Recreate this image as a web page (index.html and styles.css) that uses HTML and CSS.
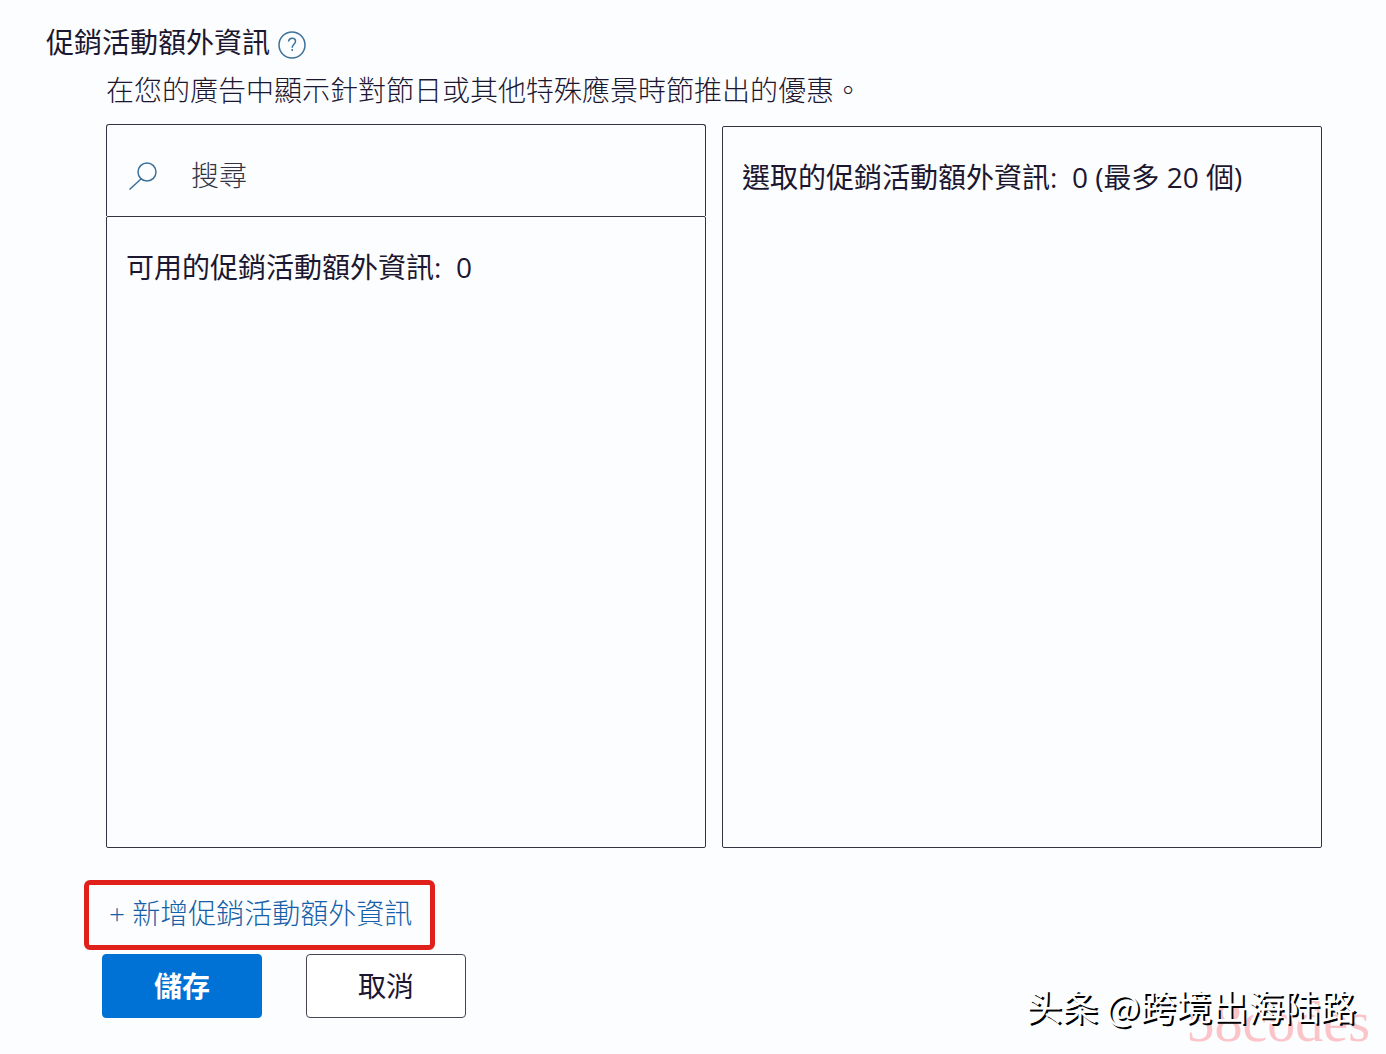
FILE: index.html
```html
<!DOCTYPE html>
<html lang="zh-Hant">
<head>
    <meta charset="utf-8">
    <title>促銷活動額外資訊</title>
    <link rel="stylesheet" href="styles.css">
</head>
<body>
    <form class="promo">
        <div class="heading">
            <h1>促銷活動額外資訊</h1>
            <button type="button" class="help" aria-label="說明">
                <svg width="28" height="28" viewBox="0 0 28 28" fill="none" stroke="currentColor" stroke-width="1.5">
                    <circle cx="14" cy="14" r="13"/>
                    <path d="M10.5 10.5c.3-2.2 1.8-3.3 3.6-3.3 2 0 3.4 1.3 3.4 3 0 3-3.3 3.2-3.3 6.6M14.2 18v2"/>
                </svg>
            </button>
        </div>

        <div class="content">
            <p class="description">在您的廣告中顯示針對節日或其他特殊應景時節推出的優惠。</p>

            <div class="picker">
                <section class="available">
                    <label class="search">
                        <svg width="30" height="30" viewBox="0 0 30 30" fill="none" stroke="currentColor" stroke-width="1.5">
                            <circle cx="18" cy="12" r="9"/>
                            <path d="M12.5 18.5L.5 29.5"/>
                        </svg>
                        <input type="text" placeholder="搜尋" aria-label="搜尋">
                    </label>
                    <div class="panel">可用的促銷活動額外資訊:&nbsp; 0</div>
                </section>
                <section class="panel selected">選取的促銷活動額外資訊:&nbsp; 0 (最多 20 個)</section>
            </div>

            <a class="add" href="#">+ 新增促銷活動額外資訊</a>

            <div class="actions">
                <button type="submit" class="save">儲存</button>
                <button type="button" class="cancel">取消</button>
            </div>
        </div>
    </form>

    <div class="site-mark">58codes</div>
    <div class="author-mark">头条 @跨境出海陆路</div>
</body>
</html>
```

FILE: styles.css
```css
* {
    box-sizing: border-box;
}

body {
    margin: 0;
    background: #fcfdfe;
    color: #1c1730;
    font-family: "Open Sans", "Noto Sans CJK TC", sans-serif;
    font-size: 28px;
    line-height: 40px;
}

button,
input {
    font: inherit;
    color: inherit;
}

.promo {
    padding: 22px 64px 36px 46px;
}

.heading {
    display: flex;
    align-items: center;
    gap: 8px;
}

h1 {
    margin: 0;
    font-size: 28px;
    font-weight: 400;
}

.help {
    display: flex;
    margin-top: 6px;
    padding: 0;
    border: 0;
    background: none;
    color: #3d7199;
    cursor: pointer;
}

.content {
    padding-left: 60px;
}

.description {
    margin: 8px 0 14px;
    font-weight: 300;
}

/* two lists side by side */
.picker {
    display: grid;
    grid-template-columns: 1fr 1fr;
    gap: 16px;
}

.available {
    display: flex;
    flex-direction: column;
}

.search {
    display: flex;
    align-items: center;
    gap: 32px;
    height: 92px;
    padding: 8px 22px 0;
    border: 1px solid #333344;
    border-bottom: 0;
    border-radius: 3px 3px 0 0;
    color: #3d7199;
}

.search input {
    flex: 1;
    min-width: 0;
    padding: 0;
    border: 0;
    outline: 0;
    background: none;
    color: #1c1730;
}

.search input::placeholder {
    color: #333344;
    font-weight: 300;
    opacity: 1;
}

.panel {
    min-height: 632px;
    padding: 30px 19px;
    border: 1px solid #333344;
    border-radius: 2px;
}

.selected {
    margin-top: 2px;
}

.add {
    display: inline-block;
    margin: 32px 0 0 -22px;
    padding: 8px 18px 12px 20px;
    border: 5px solid #e0201b;
    border-radius: 6px;
    color: #1560a8;
    font-weight: 300;
    text-decoration: none;
    vertical-align: top;
}

.actions {
    display: flex;
    gap: 44px;
    margin: 4px 0 0 -4px;
}

.actions button {
    width: 160px;
    height: 64px;
    padding: 0;
    border: 1px solid #454455;
    border-radius: 4px;
    background: #fff;
    cursor: pointer;
}

.actions .save {
    border-color: #0072d6;
    background: #0072d6;
    color: #fff;
    font-weight: 700;
}

/* watermarks over the bottom right corner */
.site-mark,
.author-mark {
    position: absolute;
    white-space: nowrap;
}

.site-mark {
    right: 16px;
    bottom: 4px;
    color: #fbc4c8;
    font: 56px/56px "Liberation Serif", serif;
}

.author-mark {
    right: 30px;
    bottom: 24px;
    color: #fff;
    font: 36px/50px "Noto Sans CJK SC", sans-serif;
    text-shadow: 2px 2px 0 #000;
}
```
